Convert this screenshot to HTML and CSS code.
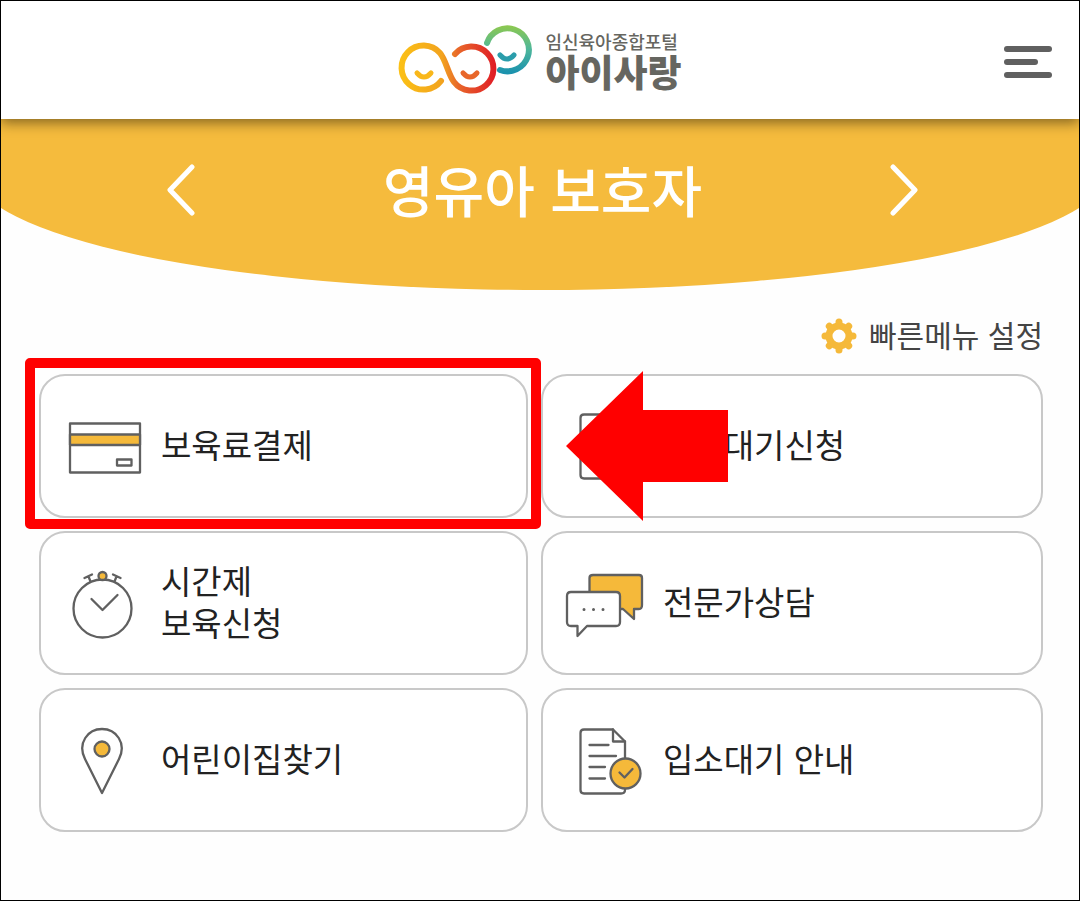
FILE: index.html
```html
<!DOCTYPE html>
<html lang="ko">
<head>
    <meta charset="UTF-8">
    <meta name="viewport" content="width=device-width, initial-scale=1.0">
    <title>아이사랑</title>
    <link rel="stylesheet" href="styles.css">
</head>
<body>
    <header class="header">
        <a class="logo" href="#">
            <svg class="logo-mark" viewBox="0 0 140 80" aria-hidden="true">
                <defs>
                    <linearGradient id="warm" gradientUnits="userSpaceOnUse" x1="2" y1="0" x2="96" y2="0">
                        <stop offset="0" stop-color="#fbc016"/>
                        <stop offset=".45" stop-color="#f2a31e"/>
                        <stop offset=".62" stop-color="#e8672a"/>
                        <stop offset="1" stop-color="#e01f26"/>
                    </linearGradient>
                    <linearGradient id="cool" gradientUnits="userSpaceOnUse" x1="0" y1="4" x2="0" y2="50">
                        <stop offset="0" stop-color="#8cc850"/>
                        <stop offset=".5" stop-color="#4fb79a"/>
                        <stop offset="1" stop-color="#1c93ae"/>
                    </linearGradient>
                </defs>
                <g fill="none" stroke-linecap="round" stroke-width="6">
                    <path stroke="url(#cool)" d="M89 21A21.5 21.5 0 1 1 102 48"/>
                    <path stroke="url(#warm)" d="M43 59A22 22 0 1 1 42 31C48 38 50 52 56 60A22 22 0 1 0 57 32"/>
                </g>
                <g fill="none" stroke-linecap="round" stroke-width="5">
                    <path stroke="#f9b71a" d="M19 51Q26 59 33 51"/>
                    <path stroke="#e8672a" d="M65 51Q72 59 79 51"/>
                    <path stroke="#2b9dab" d="M102 33Q109 41 116 33"/>
                </g>
            </svg>
            <span class="logo-text">
                <span class="logo-sub">임신육아종합포털</span>
                <strong class="logo-name">아이사랑</strong>
            </span>
        </a>
        <button class="menu-button" type="button" aria-label="메뉴">
            <span></span>
            <span class="short"></span>
            <span></span>
        </button>
    </header>

    <main>
        <div class="hero">
            <div class="hero-curve">
                <div class="hero-nav">
                    <button class="hero-arrow" type="button" aria-label="이전">
                        <svg viewBox="0 0 28 52"><path d="M25 3L3 26L25 49"/></svg>
                    </button>
                    <h1>영유아 보호자</h1>
                    <button class="hero-arrow" type="button" aria-label="다음">
                        <svg viewBox="0 0 28 52"><path d="M3 3L25 26L3 49"/></svg>
                    </button>
                </div>
            </div>
        </div>

        <section class="quick">
            <a class="quick-setting" href="#">
                <svg class="gear" viewBox="-18 -18 36 36" aria-hidden="true">
                    <circle r="10" fill="none" stroke="#f5b93a" stroke-width="7"/>
                    <g stroke="#f5b93a" stroke-width="7" stroke-linecap="round">
                        <path d="M0 -12V-14M0 12V14M-12 0H-14M12 0H14"/>
                        <path d="M8.5 -8.5L9.7 -9.7M-8.5 8.5L-9.7 9.7M-8.5 -8.5L-9.7 -9.7M8.5 8.5L9.7 9.7"/>
                    </g>
                </svg>
                <span class="label">빠른메뉴 설정</span>
            </a>

            <ul class="cards">
                <li class="marked">
                    <a class="card" href="#">
                        <svg class="icon" viewBox="0 0 80 80" aria-hidden="true">
                            <rect x="7" y="17.5" width="70" height="49"/>
                            <rect class="fill" x="7" y="28.5" width="70" height="10.5"/>
                            <rect x="54" y="53.5" width="14.5" height="6"/>
                        </svg>
                        <span class="label">보육료결제</span>
                    </a>
                </li>
                <li>
                    <a class="card" href="#">
                        <svg class="icon" viewBox="0 0 80 80" aria-hidden="true">
                            <path d="M48 8.5H19Q15.5 8.5 15.5 12V69Q15.5 72.5 19 72.5H56Q60 72.5 60 69V20.5Z"/>
                        </svg>
                        <span class="label">입소대기신청</span>
                    </a>
                    <svg class="pointer" viewBox="0 0 162 150" aria-hidden="true">
                        <path d="M0 75L77 0V39H162V111H77V150Z"/>
                    </svg>
                </li>
                <li>
                    <a class="card" href="#">
                        <svg class="icon" viewBox="0 0 80 80" aria-hidden="true">
                            <circle cx="39.5" cy="45.5" r="29"/>
                            <circle class="fill" cx="39.5" cy="13" r="4"/>
                            <path d="M21.5 15L29 11.5M25.5 13.5L27.5 18.5M57.5 15L50 11.5M53.5 13.5L51.5 18.5"/>
                            <path d="M28.5 36L39.5 47L54.5 32"/>
                        </svg>
                        <span class="label">시간제<br>보육신청</span>
                    </a>
                </li>
                <li>
                    <a class="card" href="#">
                        <svg class="icon" viewBox="0 0 80 80" aria-hidden="true">
                            <path class="fill" d="M28 12H74Q77 12 77 15V42Q77 46 74 46H69V56L58 46H28Q24.5 46 24.5 42V15Q24.5 12 28 12Z"/>
                            <path class="paper" d="M6 29H51Q55 29 55 33V59Q55 63 51 63H22L12.5 73V63H6Q2 63 2 59V33Q2 29 6 29Z"/>
                            <path class="dots" d="M19 46.5H19.01M28.5 46.5H28.51M38 46.5H38.01"/>
                        </svg>
                        <span class="label">전문가상담</span>
                    </a>
                </li>
                <li>
                    <a class="card" href="#">
                        <svg class="icon" viewBox="0 0 80 80" aria-hidden="true">
                            <path d="M39 73L22 39C14 23 25 9 39 9C53 9 64 23 56 39Z"/>
                            <circle class="fill" cx="39" cy="29" r="7.5"/>
                        </svg>
                        <span class="label">어린이집찾기</span>
                    </a>
                </li>
                <li>
                    <a class="card" href="#">
                        <svg class="icon" viewBox="0 0 80 80" aria-hidden="true">
                            <path d="M48 9.5H19Q15.5 9.5 15.5 13V70Q15.5 73.5 19 73.5H56Q60 73.5 60 70V21.5Z"/>
                            <path d="M48 9.5V21.5H60"/>
                            <path d="M24.5 25H43.5M24.5 36H51M24.5 47H40M24.5 58.5H40"/>
                            <circle class="fill" cx="60.5" cy="53.5" r="15"/>
                            <path d="M54.5 52.5L59.5 57.5L67.5 49"/>
                        </svg>
                        <span class="label">입소대기 안내</span>
                    </a>
                </li>
            </ul>
        </section>
    </main>
</body>
</html>
```
FILE: styles.css
```css
* {
    box-sizing: border-box;
}
body {
    margin: 0;
    min-height: 100vh;
    border: 1px solid #000;
    font-family: "Noto Sans CJK KR", "Noto Sans", sans-serif;
    color: #222;
    background-color: #fefefe;
}
a {
    color: inherit;
    text-decoration: none;
}
button {
    padding: 0;
    border: none;
    background: none;
    cursor: pointer;
}

/* Header */
.header {
    position: relative;
    z-index: 1;
    display: grid;
    grid-template-columns: 1fr auto 1fr;
    align-items: center;
    height: 118px;
    padding: 3px 27px 0;
    background-color: #fff;
    box-shadow: 0 4px 12px rgba(0, 0, 0, .45);
}
.logo {
    grid-column: 2;
    display: flex;
    align-items: center;
    gap: 7px;
}
.logo-mark {
    width: 140px;
    height: 80px;
}
.logo-text {
    display: flex;
    flex-direction: column;
    color: #666660;
}
.logo-sub {
    font-size: 18px;
    font-weight: 500;
    line-height: 18px;
}
.logo-name {
    font-size: 37px;
    font-weight: 900;
    line-height: 42px;
}
.menu-button {
    justify-self: end;
    display: flex;
    flex-direction: column;
    gap: 7px;
    width: 48px;
}
.menu-button span {
    width: 100%;
    height: 6px;
    border-radius: 3px;
    background-color: #606060;
}
.menu-button .short {
    width: 34px;
}

/* Yellow banner, the ellipse is a bit wider than the page */
.hero {
    overflow: hidden;
}
.hero-curve {
    height: 171px;
    margin: 0 -28px;
    padding: 0 28px;
    border-radius: 0 0 50% 50% / 0 0 119px 119px;
    background-color: #f5bb3d;
}
.hero-nav {
    display: flex;
    align-items: center;
    justify-content: space-between;
    height: 142px;
    padding: 0 161px 0 166px;
}
.hero h1 {
    margin: 0;
    padding-bottom: 4px;
    font-size: 55px;
    font-weight: 500;
    line-height: 80px;
    color: #fff;
}
.hero-arrow svg {
    display: block;
    width: 28px;
    height: 52px;
    fill: none;
    stroke: #fff;
    stroke-width: 5;
    stroke-linecap: round;
    stroke-linejoin: round;
}

/* Quick menu */
.quick {
    padding: 24px 36px 66px 38px;
}
.quick-setting {
    display: flex;
    align-items: center;
    justify-content: flex-end;
    gap: 12px;
    height: 44px;
    margin-bottom: 16px;
    font-size: 30px;
    line-height: 44px;
    color: #444;
}
.label {
    padding-bottom: 4px;
}
.gear {
    width: 36px;
    height: 36px;
}
.cards {
    display: grid;
    grid-template-columns: 489fr 502fr;
    gap: 13px;
    margin: 0;
    padding: 0;
    list-style: none;
}
.cards li {
    position: relative;
}
.card {
    display: flex;
    align-items: center;
    gap: 18px;
    height: 144px;
    padding: 0 22px;
    border: 2px solid #c8c8c8;
    border-radius: 26px;
    background-color: #fff;
    font-size: 33px;
    line-height: 42px;
}
.icon {
    flex: none;
    width: 80px;
    height: 80px;
    fill: none;
    stroke: #606060;
    stroke-width: 2.3;
    stroke-linecap: round;
    stroke-linejoin: round;
}
.icon .fill {
    fill: #f5b93a;
}
.icon .paper {
    fill: #fff;
}
.icon .dots {
    stroke-width: 3;
}

/* Red box and arrow over the first card */
.marked::after {
    content: "";
    position: absolute;
    inset: -16px -13px -11px -14px;
    border: 10px solid #f00;
    border-radius: 5px;
    pointer-events: none;
}
.pointer {
    position: absolute;
    top: -3px;
    left: 25px;
    width: 162px;
    height: 150px;
    fill: #f00;
    pointer-events: none;
}
```
